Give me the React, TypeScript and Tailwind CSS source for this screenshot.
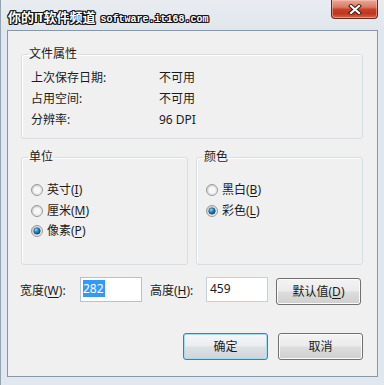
const ui = "font-['Noto_Sans','Noto_Sans_CJK_SC',sans-serif]"
const outline =
  "[text-shadow:1px_0_#111,-1px_0_#111,0_1px_#111,0_-1px_#111,1px_1px_#111,-1px_-1px_#111,1px_-1px_#111,-1px_1px_#111]"

function Radio({ checked }: { checked?: boolean }) {
  return (
    <svg width="12" height="12" viewBox="0 0 12 12" className="shrink-0">
      <defs>
        <linearGradient id="radio-ring" x1="0" y1="0" x2="1" y2="1">
          <stop offset="0" stopColor="#c9c9c9" />
          <stop offset="1" stopColor="#f6f6f6" />
        </linearGradient>
        <radialGradient id="radio-dot" cx="0.35" cy="0.3" r="0.8">
          <stop offset="0" stopColor="#9adcfc" />
          <stop offset="0.45" stopColor="#2b84c1" />
          <stop offset="1" stopColor="#0c3b5f" />
        </radialGradient>
      </defs>
      <circle cx="6" cy="6" r="5.5" fill="url(#radio-ring)" stroke="#979a9c" />
      <circle cx="6" cy="6" r="3.6" fill="#f7f7f7" />
      {checked && <circle cx="6" cy="6" r="3.3" fill="url(#radio-dot)" stroke="#1d4e74" strokeWidth="0.6" />}
    </svg>
  )
}

function Button({ children, primary }: { children: React.ReactNode; primary?: boolean }) {
  return (
    <div
      className={
        "w-[85px] h-[27px] flex items-center justify-center rounded-[3px] border text-[12px] text-[#1b1b1b] " +
        (primary
          ? "border-[#3c7fb1] bg-[linear-gradient(#f4f6f8_0%,#eaedf0_48%,#dde1e5_52%,#d0d5da_100%)] shadow-[inset_0_0_0_1px_#a9dcf3]"
          : "border-[#707070] bg-[linear-gradient(#f3f3f3_0%,#ebebeb_48%,#dddddd_52%,#cfcfcf_100%)] shadow-[inset_0_0_0_1px_#fbfbfb]")
      }
    >
      {children}
    </div>
  )
}

function Group({ title, children, className }: { title: string; children: React.ReactNode; className?: string }) {
  return (
    <fieldset className={"border border-[#d5dfe5] rounded-[3px] shadow-[inset_1px_1px_0_#fff] " + (className ?? "")}>
      <legend className="ml-[6px] px-[1px] leading-[14px] text-[12px]">{title}</legend>
      {children}
    </fieldset>
  )
}

export default function App() {
  return (
    <div className={`w-[384px] h-[385px] overflow-hidden flex flex-col bg-[#e1e7ee] border-l border-[#95a2b0] ${ui}`}>
      {/* title bar */}
      <div className="h-[30px] shrink-0 flex items-start justify-between pl-[7px] pr-[6px] bg-[linear-gradient(#e9edf2,#e0e6ed)]">
        <div className={`pt-[9px] leading-[16px] text-white font-bold whitespace-nowrap flex items-baseline ${outline}`}>
          <span className="text-[13px] font-['Noto_Sans_CJK_SC',sans-serif]">
            你的<span className="tracking-[-1px] text-[12px]">IT</span>软件频道
          </span>
          <span className="ml-[5px] text-[10px] font-['Liberation_Mono',monospace]">software.it168.com</span>
        </div>
        <div className="w-[47px] h-[19px] rounded-b-[4px] border border-t-0 border-[#6b2a1f] bg-[linear-gradient(#e8a998_0%,#d87a63_40%,#c5432a_52%,#c0351b_75%,#d4654a_100%)] shadow-[inset_0_0_0_1px_rgba(255,210,200,0.45)] flex items-center justify-center">
          <svg width="14" height="11" viewBox="0 0 14 11">
            <path d="M3 2 L11 9 M11 2 L3 9" stroke="#3b1610" strokeWidth="4" strokeLinecap="square" />
            <path d="M3 2 L11 9 M11 2 L3 9" stroke="#fff" strokeWidth="2.2" strokeLinecap="square" />
          </svg>
        </div>
      </div>

      {/* client area */}
      <div className="h-[347px] ml-[6px] mr-[6px] shrink-0 border border-[#8797aa] bg-[#f0f0f0] text-[12px] text-[#1b1b1b] pl-[13px] pr-[14px] pt-[16px]">
        <Group title="文件属性" className="h-[92px]">
          <div className="pl-[9px] pt-[6px]">
            {[
              ["上次保存日期:", "不可用"],
              ["占用空间:", "不可用"],
              ["分辨率:", "96 DPI"],
            ].map(([k, v]) => (
              <div key={k} className="flex leading-[21px]">
                <span className="w-[128px]">{k}</span>
                <span>{v}</span>
              </div>
            ))}
          </div>
        </Group>

        <div className="mt-[11px] grid grid-cols-2 gap-[8px]">
          <Group title="单位" className="h-[115px]">
            <div className="pl-[9px] pt-[16px]">
              <div className="h-[20.5px] flex items-center gap-[4px]">
                <Radio />
                <span>
                  英寸(<u className="underline-offset-2">I</u>)
                </span>
              </div>
              <div className="h-[20.5px] flex items-center gap-[4px]">
                <Radio />
                <span>
                  厘米(<u className="underline-offset-2">M</u>)
                </span>
              </div>
              <div className="h-[20.5px] flex items-center gap-[4px]">
                <Radio checked />
                <span>
                  像素(<u className="underline-offset-2">P</u>)
                </span>
              </div>
            </div>
          </Group>
          <Group title="颜色" className="h-[115px]">
            <div className="pl-[9px] pt-[16px]">
              <div className="h-[20.5px] flex items-center gap-[4px]">
                <Radio />
                <span>
                  黑白(<u className="underline-offset-2">B</u>)
                </span>
              </div>
              <div className="h-[20.5px] flex items-center gap-[4px]">
                <Radio checked />
                <span>
                  彩色(<u className="underline-offset-2">L</u>)
                </span>
              </div>
            </div>
          </Group>
        </div>

        {/* size row */}
        <div className="mt-[12px] h-[28px] flex items-start -ml-[1px]">
          <span className="w-[60px] mt-[7px] leading-[14px]">
            宽度(<u className="underline-offset-2">W</u>):
          </span>
          <div className="w-[62px] h-[25px] border border-[#b3c3d7] bg-white pl-[2px] pt-[2px] text-[12px]">
            <span className="inline-block bg-[#3399ff] text-white leading-[17px] pr-[1px]">282</span>
          </div>
          <span className="ml-[8px] w-[56px] mt-[7px] leading-[14px]">
            高度(<u className="underline-offset-2">H</u>):
          </span>
          <div className="w-[62px] h-[25px] border border-[#c5d0dd] bg-white pl-[3px] pt-[2px] leading-[17px]">459</div>
          <div className="ml-[8px] mt-[1px]">
            <Button>
              默认值(<u className="underline-offset-2">D</u>)
            </Button>
          </div>
        </div>

        <div className="mt-[28px] flex justify-end gap-[10px]">
          <Button primary>确定</Button>
          <Button>取消</Button>
        </div>
      </div>
    </div>
  )
}
